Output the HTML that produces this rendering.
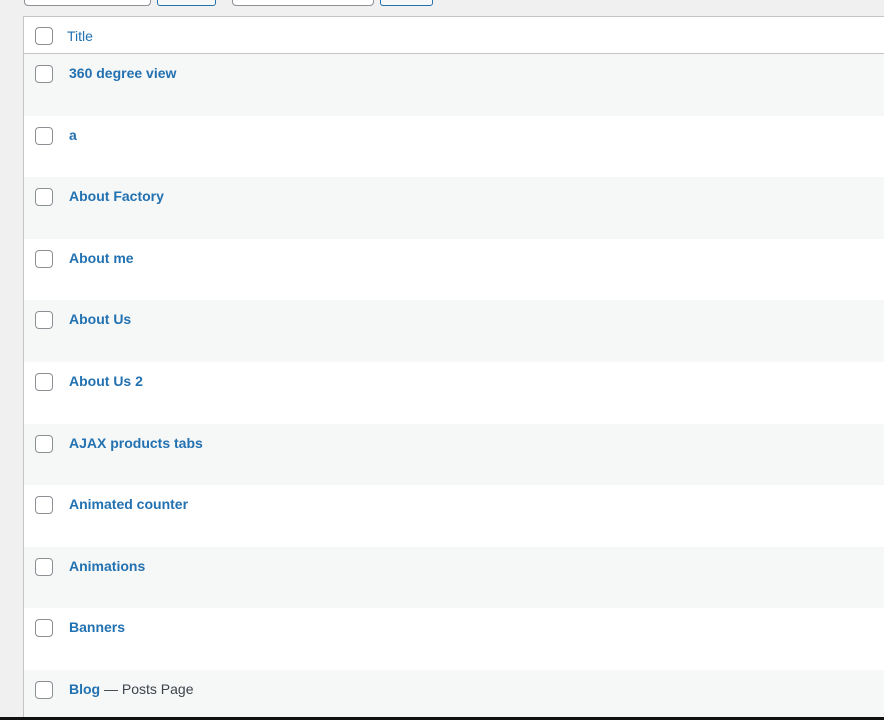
<!DOCTYPE html>
<html style="width:884px;height:720px;overflow:hidden"><head><style>
body{margin:0;width:884px;height:720px;overflow:hidden;background:#f0f0f1;font-family:"Liberation Sans",sans-serif;position:relative}
.in{position:absolute;top:-10px;height:14px;border:1px solid #8c8f94;border-radius:4px;background:#fff}
.btn{position:absolute;top:-10px;height:14px;border:1px solid #2271b1;border-radius:3px;background:#f6f7f7}
.tbl{position:absolute;left:23px;top:16px;width:870px;height:700px;background:#fff;border:1px solid #c3c4c7;overflow:hidden}
.hd{height:36px;border-bottom:1px solid #c3c4c7;position:relative}
.cb{position:absolute;left:11px;width:16px;height:16px;border:1px solid #8c8f94;border-radius:4px;background:#fff}
.row{height:61.6px;position:relative}
.row:nth-child(even){background:#f6f7f7}
.t{position:absolute;left:45px;top:11px;font-size:14px;font-weight:bold;color:#2271b1}
.t span{font-weight:normal;color:#3c434a}
.bar{position:absolute;left:0;top:717px;width:884px;height:3px;background:#111}
</style></head><body>
<div class="in" style="left:24px;width:125px"></div>
<div class="btn" style="left:157px;width:57px"></div>
<div class="in" style="left:232px;width:140px"></div>
<div class="btn" style="left:380px;width:51px"></div>
<div class="tbl">
<div class="hd"><div class="cb" style="top:10px"></div><div style="position:absolute;left:43px;top:11px;font-size:14px;color:#2271b1">Title</div></div>
<div>
<div class="row" style="display:none"></div>
<div class="row"><div class="cb" style="top:11px"></div><div class="t">360 degree view</div></div>
<div class="row"><div class="cb" style="top:11px"></div><div class="t">a</div></div>
<div class="row"><div class="cb" style="top:11px"></div><div class="t">About Factory</div></div>
<div class="row"><div class="cb" style="top:11px"></div><div class="t">About me</div></div>
<div class="row"><div class="cb" style="top:11px"></div><div class="t">About Us</div></div>
<div class="row"><div class="cb" style="top:11px"></div><div class="t">About Us 2</div></div>
<div class="row"><div class="cb" style="top:11px"></div><div class="t">AJAX products tabs</div></div>
<div class="row"><div class="cb" style="top:11px"></div><div class="t">Animated counter</div></div>
<div class="row"><div class="cb" style="top:11px"></div><div class="t">Animations</div></div>
<div class="row"><div class="cb" style="top:11px"></div><div class="t">Banners</div></div>
<div class="row"><div class="cb" style="top:11px"></div><div class="t">Blog <span>— Posts Page</span></div></div>
</div>
</div>
<div class="bar"></div>
</body></html>
